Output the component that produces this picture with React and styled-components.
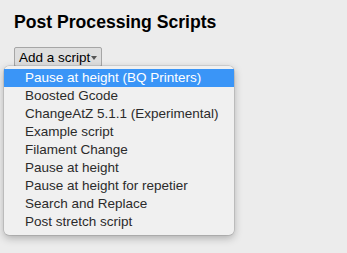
import React from "react";
import styled, { createGlobalStyle } from "styled-components";

const GlobalStyle = createGlobalStyle`
  html, body {
    margin: 0;
    padding: 0;
    background: #ececec;
    font-family: "Liberation Sans", Arial, sans-serif;
  }
`;

const SCRIPTS = [
  "Pause at height (BQ Printers)",
  "Boosted Gcode",
  "ChangeAtZ 5.1.1 (Experimental)",
  "Example script",
  "Filament Change",
  "Pause at height",
  "Pause at height for repetier",
  "Search and Replace",
  "Post stretch script",
];

const App = () => {
  return (
    <Page>
      <GlobalStyle />
      <Title>Post Processing Scripts</Title>
      <Picker>
        <SelectButton>
          Add a script
          <Caret />
        </SelectButton>
        <Menu>
          {SCRIPTS.map((name, i) => (
            <MenuItem key={name} active={i === 0}>
              {name}
            </MenuItem>
          ))}
        </Menu>
      </Picker>
    </Page>
  );
};

export default App;

const Page = styled.div`
  width: 347px;
  height: 253px;
  padding: 12px 0 0 14px;
  box-sizing: border-box;
`;

const Title = styled.h2`
  margin: 0;
  font-size: 17.6px;
  line-height: 21px;
  font-weight: bold;
  color: #000;
`;

const Picker = styled.div`
  position: relative;
  margin-top: 14px;
`;

const SelectButton = styled.div`
  display: inline-flex;
  align-items: center;
  height: 20px;
  box-sizing: border-box;
  padding: 0 4px 0 4px;
  border: 1px solid #a6a6a6;
  border-radius: 2px;
  background: #dedede;
  font-size: 13.5px;
  color: #000;
`;

const Caret = styled.span`
  width: 0;
  height: 0;
  margin-left: 1px;
  margin-top: 2px;
  border-left: 3.5px solid transparent;
  border-right: 3.5px solid transparent;
  border-top: 4px solid #555;
`;

const Menu = styled.div`
  position: absolute;
  left: -10px;
  top: 19px;
  width: 230px;
  padding: 3px 0 4px;
  background: #f0f0f0;
  border-radius: 5px;
  box-shadow: 0 0 0 0.5px rgba(0, 0, 0, 0.18), 0 3px 8px rgba(0, 0, 0, 0.28);
`;

const MenuItem = styled.div`
  height: 18px;
  line-height: 18px;
  padding-left: 21px;
  font-size: 13.5px;
  color: ${(p) => (p.active ? "#fff" : "#2b2b2b")};
  background: ${(p) => (p.active ? "#3a95f7" : "transparent")};
`;
